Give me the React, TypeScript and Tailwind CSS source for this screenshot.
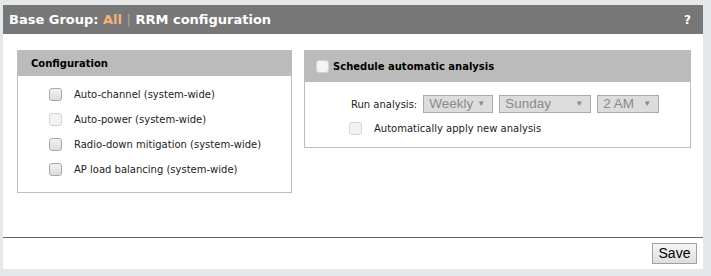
import React from "react";

const font = { fontFamily: '"DejaVu Sans", Verdana, sans-serif' };

function Box({ disabled = false }: { disabled?: boolean }) {
  return (
    <span
      className={
        "inline-block w-[13px] h-[13px] rounded-[3px] border " +
        (disabled
          ? "border-[#d4d4d4] bg-[#f3f3f3]"
          : "border-[#a9a9a9] bg-gradient-to-b from-[#f2f2f2] to-[#dcdcdc]")
      }
    />
  );
}

function Select({ label, w }: { label: string; w: string }) {
  return (
    <div
      className={`${w} h-[18px] border border-[#a9a9a9] bg-[#dcdcdc] flex items-center justify-between pl-[5px] pr-[7px] text-[13.5px] text-[#8a8a8a]`}
      style={{ fontFamily: '"Liberation Sans", Arial, sans-serif' }}
    >
      <span>{label}</span>
      <span className="text-[8px] text-[#8a8a8a]">▼</span>
    </div>
  );
}

export default function App() {
  const items = [
    { t: "Auto-channel (system-wide)", d: false },
    { t: "Auto-power (system-wide)", d: true },
    { t: "Radio-down mitigation (system-wide)", d: false },
    { t: "AP load balancing (system-wide)", d: false },
  ];
  return (
    <div className="w-[711px] h-[276px] bg-[#e4e8e9] pt-[5px] pl-[3px]" style={font}>
      <div className="w-[700px] h-[264px] bg-white flex flex-col">
        <div className="h-[29px] bg-[#777777] flex items-center justify-between pl-[6px] pr-[12px] text-white font-bold text-[13px]">
          <span>
            Base Group: <span className="text-[#f7b27a]">All</span>{" "}
            <span className="text-[#a9a9a9] font-normal">|</span> RRM configuration
          </span>
          <span className="text-[12px]">?</span>
        </div>
        <div className="flex items-start gap-[12px] pl-[14px] pt-[16px] h-[203px]">
          <div className="w-[275px] h-[143px] border border-[#bdbdbd] flex flex-col">
            <div className="h-[25px] bg-[#bbbbbb] flex items-center pl-[13px] text-[10px] font-bold text-black">
              Configuration
            </div>
            <div className="flex flex-col pl-[31px] pt-[12px] gap-[12px]">
              {items.map((it) => (
                <div key={it.t} className="flex items-center gap-[12px] h-[13px] text-[10px] text-[#222]">
                  <Box disabled={it.d} />
                  <span>{it.t}</span>
                </div>
              ))}
            </div>
          </div>
          <div className="w-[387px] h-[98px] border border-[#bdbdbd] flex flex-col">
            <div className="h-[31px] bg-[#bbbbbb] flex items-center pl-[11px] gap-[4px] text-[10px] font-bold text-black">
              <Box disabled />
              <span>Schedule automatic analysis</span>
            </div>
            <div className="flex flex-col pl-[44px] pt-[13px]">
              <div className="flex items-center gap-[6px] text-[10px] text-[#222]">
                <span className="ml-[2px]">Run analysis:</span>
                <Select label="Weekly" w="w-[70px]" />
                <Select label="Sunday" w="w-[92px]" />
                <Select label="2 AM" w="w-[62px]" />
              </div>
              <div className="flex items-center gap-[12px] mt-[8px] text-[10px] text-[#222]">
                <Box disabled />
                <span>Automatically apply new analysis</span>
              </div>
            </div>
          </div>
        </div>
        <div className="border-t border-[#666]" />
        <div className="flex justify-end pr-[6px] pt-[5px]">
          <button
            className="w-[45px] h-[21px] border border-[#a0a0a0] bg-gradient-to-b from-[#f6f6f6] to-[#dedede] text-[14px] text-black flex items-center justify-center"
            style={{ fontFamily: '"Liberation Sans", Arial, sans-serif' }}
          >
            Save
          </button>
        </div>
      </div>
    </div>
  );
}
